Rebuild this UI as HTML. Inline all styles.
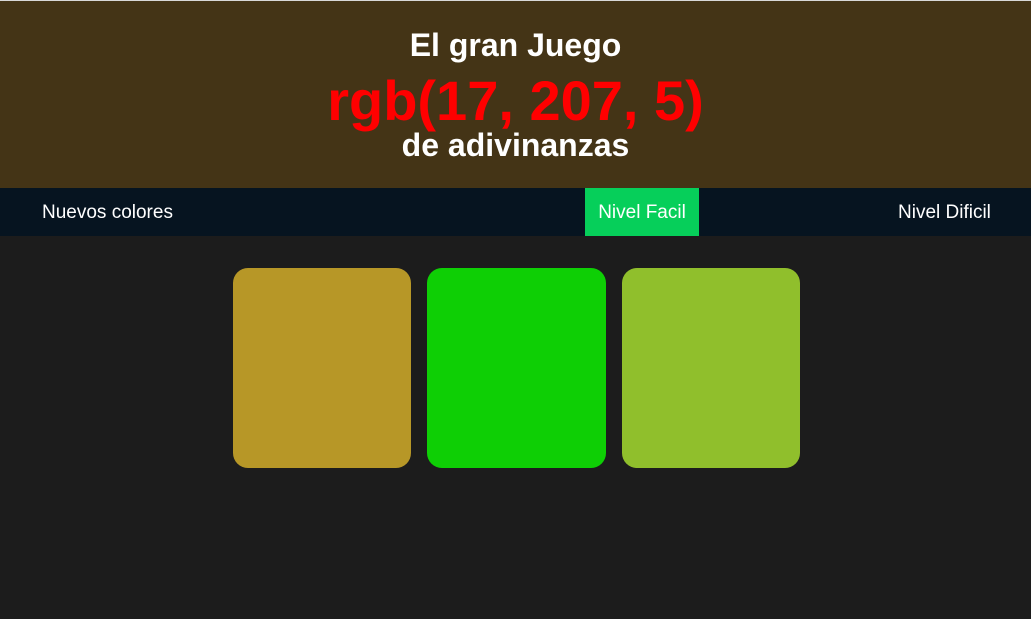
<!DOCTYPE html>
<html><head><meta charset="utf-8"><style>
html,body{margin:0;padding:0;width:1031px;height:619px;overflow:hidden;background:#1c1c1c;font-family:"Liberation Sans",Arial,sans-serif;}
.top{position:absolute;left:0;top:0;width:1031px;height:1px;background:#d8d8d8;}
header{position:absolute;left:0;top:1px;width:1031px;height:187px;background:#443416;color:#fff;text-align:center;}
.t{position:absolute;left:0;width:100%;font-weight:bold;white-space:nowrap;}
nav{position:absolute;left:0;top:188px;width:1031px;height:48px;background:#061420;color:#fff;font-size:19px;}
nav span{position:absolute;top:1px;line-height:48px;}
.btn{top:0 !important;left:585px;width:114px;text-align:center;background:#06cf5a;padding-top:1px;height:47px;line-height:48px;}
.sq{position:absolute;top:268px;width:178px;height:200px;border-radius:15px;}
</style></head><body>
<div class="top"></div>
<header>
<div class="t" style="top:26px;font-size:32px;">El gran Juego</div>
<div class="t" style="top:67px;font-size:56px;color:#ff0000;">rgb(17, 207, 5)</div>
<div class="t" style="top:126px;font-size:32px;">de adivinanzas</div>
</header>
<nav>
<span style="left:42px;">Nuevos colores</span>
<span class="btn">Nivel Facil</span>
<span style="left:898px;">Nivel Dificil</span>
</nav>
<div class="sq" style="left:233px;background:#b79727;"></div>
<div class="sq" style="left:427px;width:179px;background:#0ecf05;"></div>
<div class="sq" style="left:622px;background:#90bf2c;"></div>
</body></html>
